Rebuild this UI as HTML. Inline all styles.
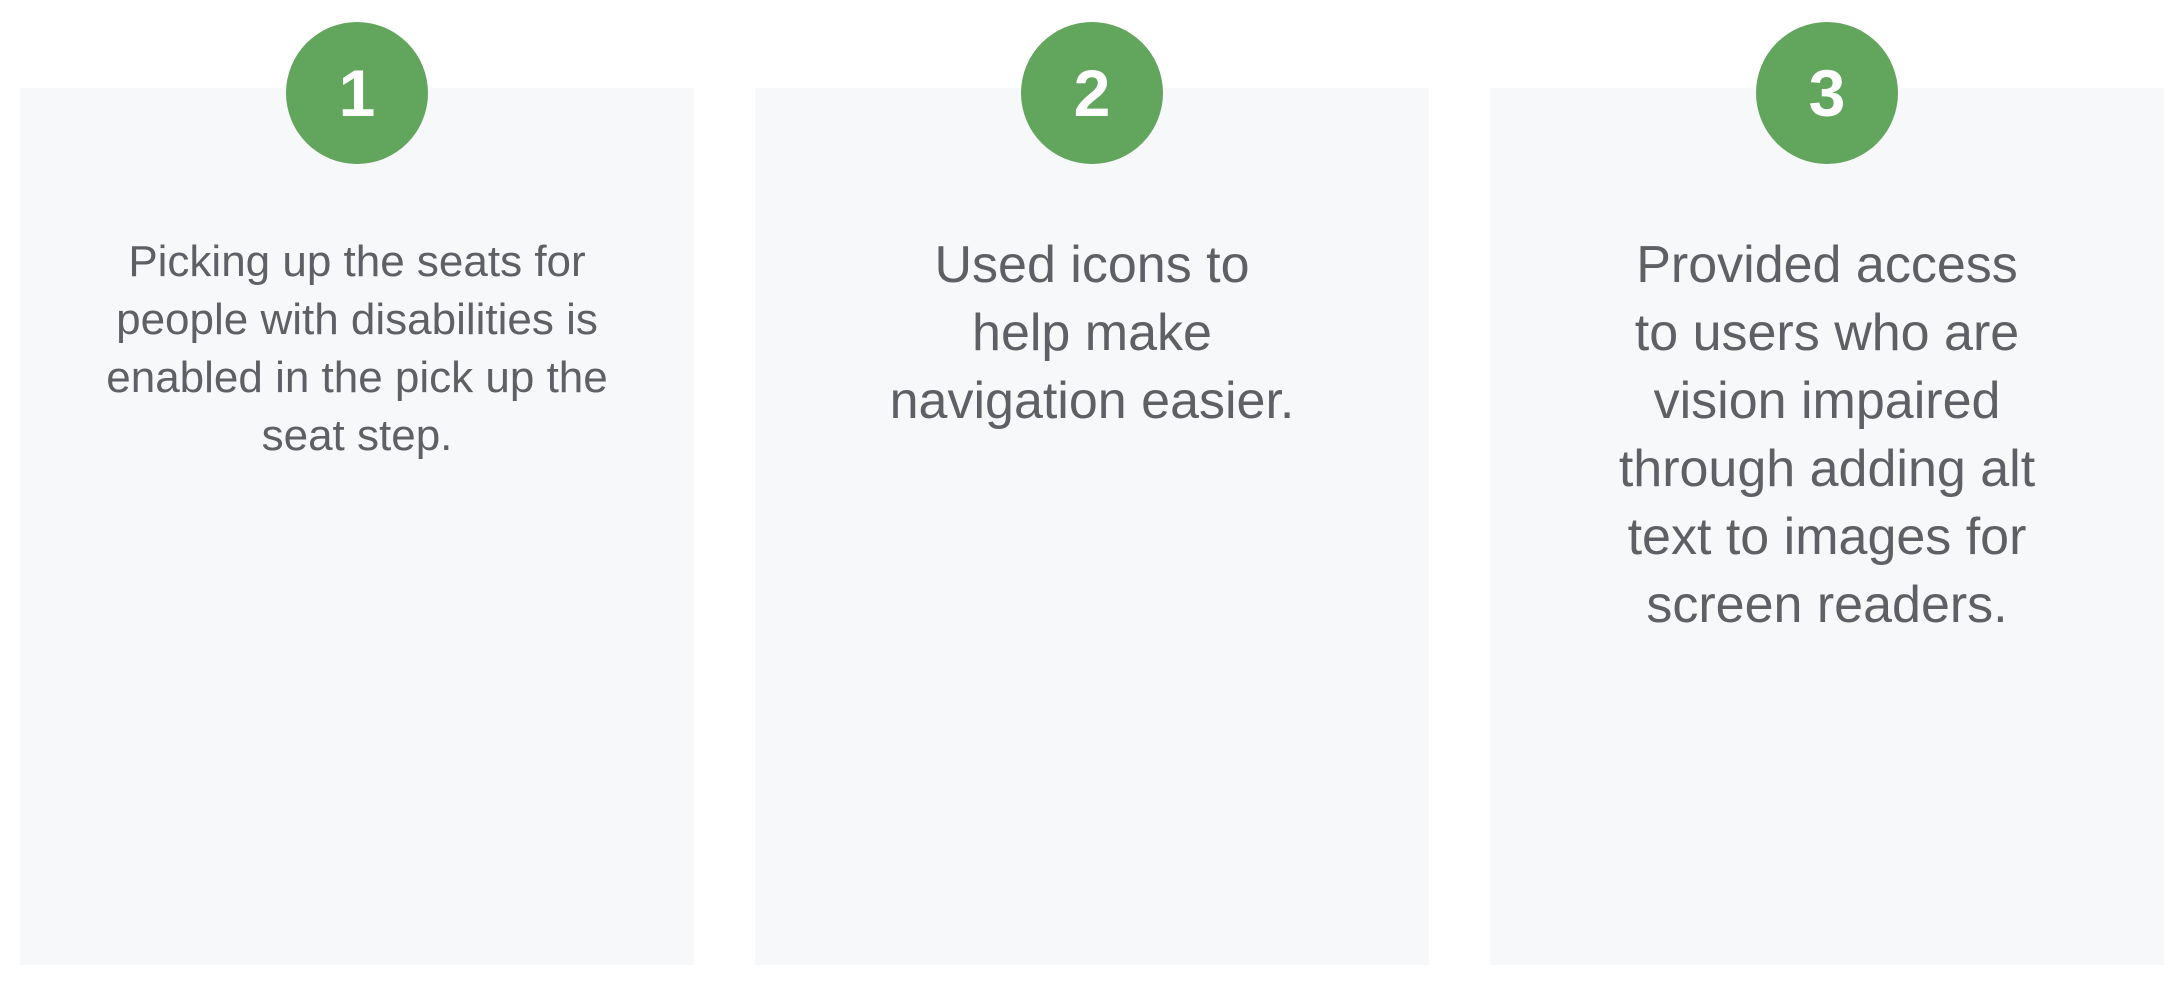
<!DOCTYPE html>
<html><head><meta charset="utf-8"><style>
html,body{margin:0;padding:0;background:#fff;width:2184px;height:990px;overflow:hidden;font-family:"Liberation Sans",sans-serif;}
.card{position:absolute;top:88px;width:674px;height:877px;background:#f7f8fa;}
.circ{position:absolute;top:22px;width:142px;height:142px;border-radius:50%;background:#62a55c;color:#fff;font-weight:bold;font-size:66px;line-height:142px;text-align:center;}
.t{position:absolute;left:0;width:674px;text-align:center;color:#5f6066;white-space:nowrap;}
.t1{top:145px;font-size:44px;line-height:58px;}
.t2{top:143px;font-size:52px;line-height:68px;}
</style></head><body>
<div class="card" style="left:20px"><div class="t t1">Picking up the seats for<br>people with disabilities is<br>enabled in the pick up the<br>seat step.</div></div>
<div class="card" style="left:755px"><div class="t t2">Used icons to<br>help make<br>navigation easier.</div></div>
<div class="card" style="left:1490px"><div class="t t2">Provided access<br>to users who are<br>vision impaired<br>through adding alt<br>text to images for<br>screen readers.</div></div>
<div class="circ" style="left:286px">1</div>
<div class="circ" style="left:1021px">2</div>
<div class="circ" style="left:1756px">3</div>
</body></html>
